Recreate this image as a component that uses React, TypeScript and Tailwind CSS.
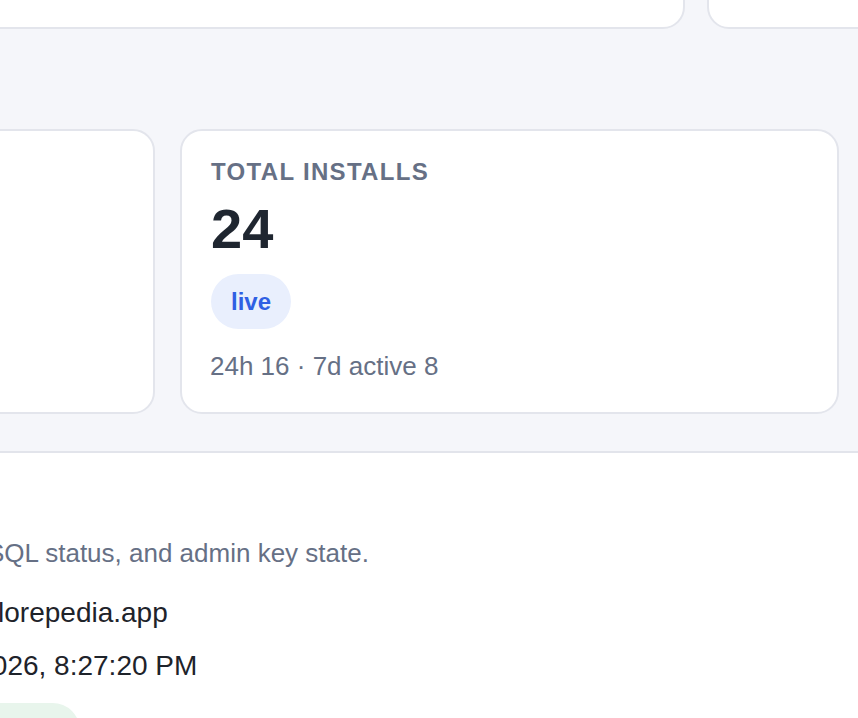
import React from "react";

type Stat = {
  label: string;
  value: string;
  badge: string;
  detail: string;
};

const installs: Stat = {
  label: "Total installs",
  value: "24",
  badge: "live",
  detail: "24h 16 · 7d active 8",
};

function StatCard({ stat }: { stat: Stat }) {
  return (
    <div className="flex w-[659px] shrink-0 flex-col rounded-[22px] border-2 border-[#e3e5ec] bg-white pr-[28px] pl-[29px] pt-[27px] pb-[28px]">
      <div className="text-[24px] leading-[28px] font-bold uppercase tracking-[0.055em] text-[#667085]">
        {stat.label}
      </div>
      <div className="mt-[14px] text-[56px] leading-[58px] font-bold text-[#1f2630]">
        {stat.value}
      </div>
      <div className="mt-[16px] flex">
        <span className="flex h-[55px] items-center rounded-full bg-[#e9effd] px-[20px] text-[24px] leading-[28px] font-bold text-[#2f5fe3]">
          {stat.badge}
        </span>
      </div>
      <div className="mt-[19px] -ml-[1px] text-[26px] leading-[36px] text-[#667085]">
        {stat.detail}
      </div>
    </div>
  );
}

export default function App() {
  return (
    <div
      className="h-[718px] w-[858px] overflow-hidden bg-white"
      style={{ fontFamily: '"Liberation Sans", Arial, sans-serif' }}
    >
      {/* overview grid */}
      <section className="border-b-2 border-[#e2e4eb] bg-[#f5f6fa] pb-[37px]">
        <div className="-mt-[71px] -ml-[40px] flex gap-[22px]">
          <div className="h-[100px] w-[725px] shrink-0 rounded-[22px] border-2 border-[#e3e5ec] bg-white" />
          <div className="h-[100px] w-[300px] shrink-0 rounded-[22px] border-2 border-[#e3e5ec] bg-white" />
        </div>

        <div className="mt-[100px] -ml-[40px] flex gap-[25px]">
          <div className="h-[285px] w-[195px] shrink-0 rounded-[22px] border-2 border-[#e3e5ec] bg-white" />
          <StatCard stat={installs} />
        </div>
      </section>

      {/* deployment status */}
      <section className="-ml-[81px] flex flex-col items-start pt-[82px]">
        <p className="whitespace-nowrap text-[26px] leading-[36px] text-[#667085]">
          Host, SQL status, and admin key state.
        </p>
        <div className="-ml-[5px] mt-[24px] flex flex-col items-start">
          <div className="whitespace-nowrap text-[28px] leading-[36px] text-[#1e232a]">
            https://lorepedia.app
          </div>
          <div className="mt-[17px] whitespace-nowrap text-[28px] leading-[36px] text-[#1e232a]">
            1/12/2026, 8:27:20 PM
          </div>
          <span className="mt-[19px] flex h-[55px] items-center rounded-full bg-[#e8f5ec] px-[23px] text-[24px] leading-[28px] font-bold text-[#1f8a4c]">
            connected
          </span>
        </div>
      </section>
    </div>
  );
}
